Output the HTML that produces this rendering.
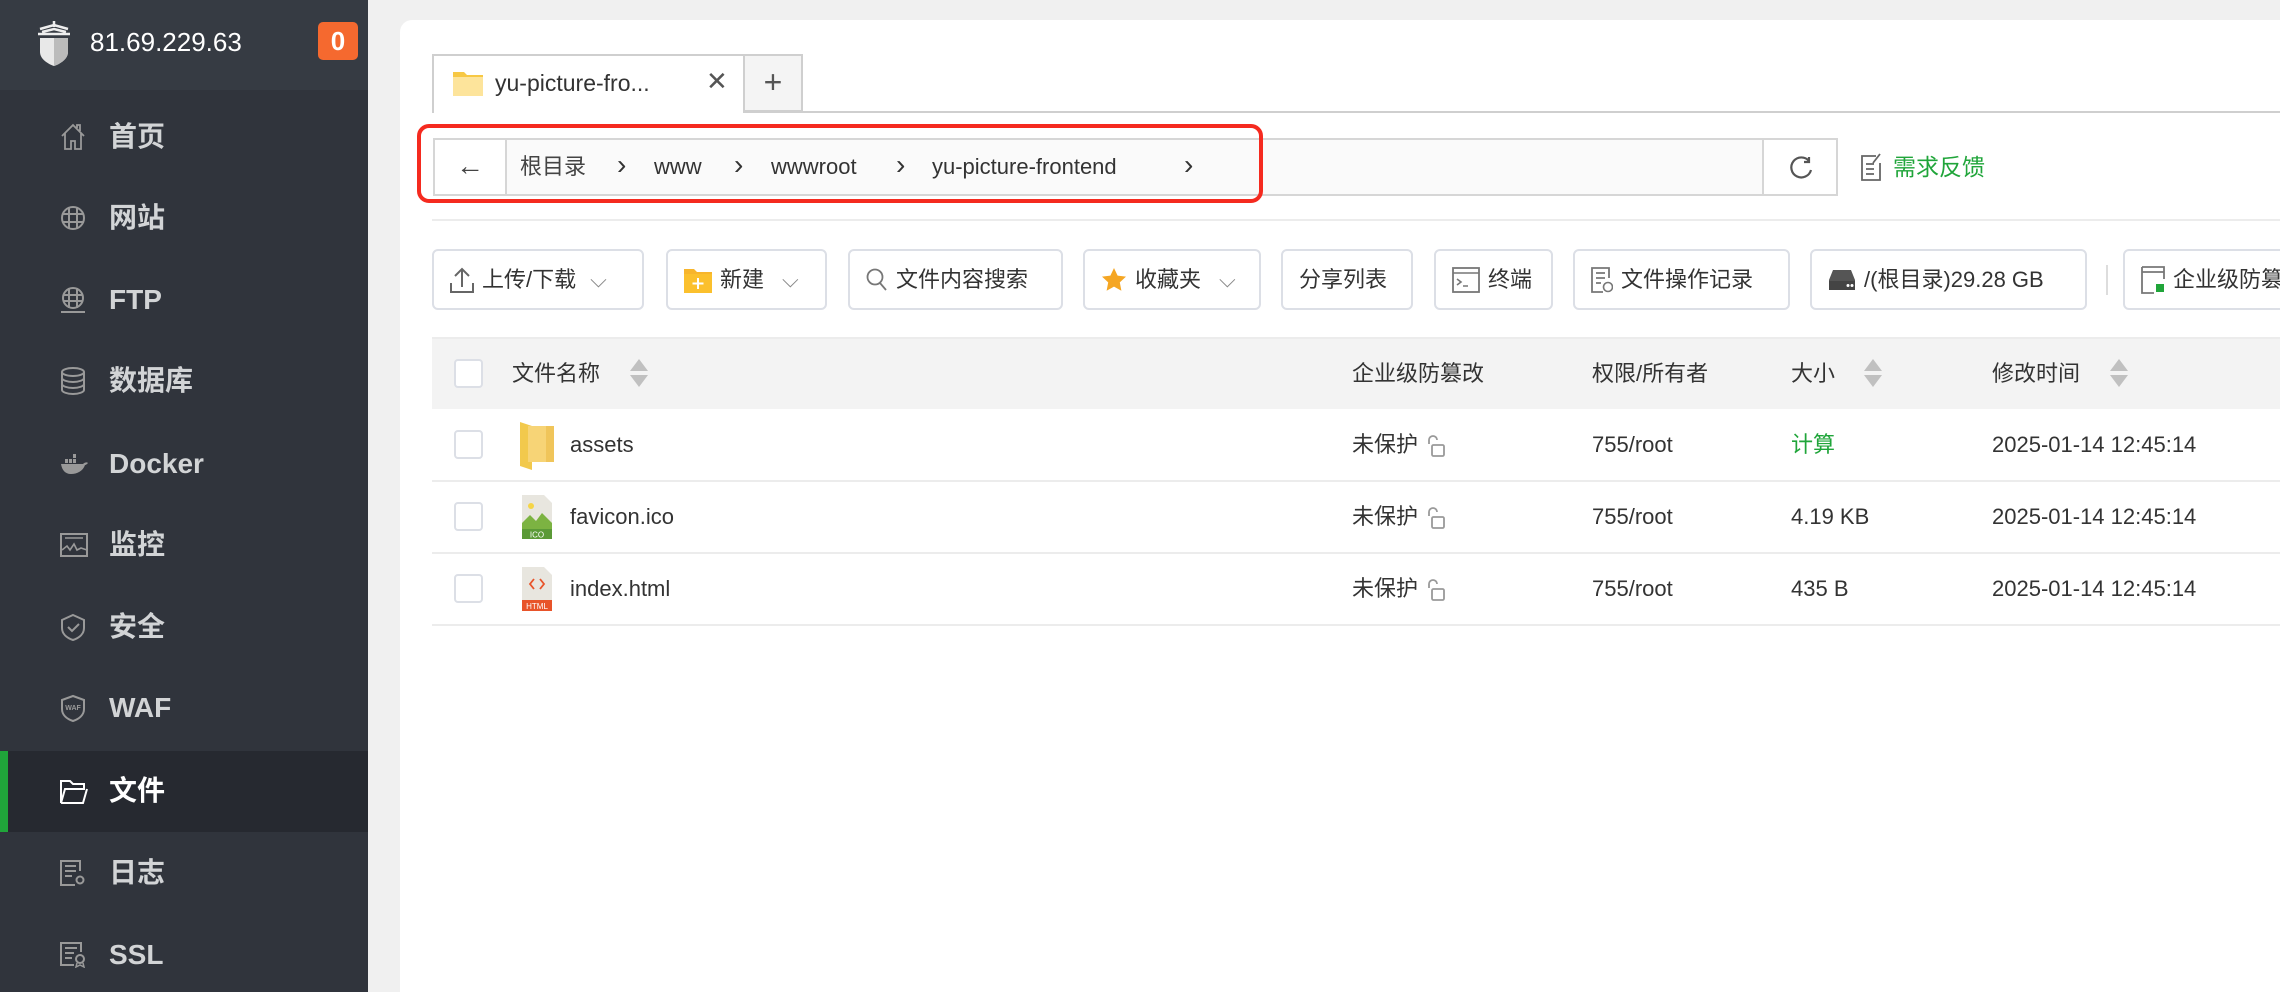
<!DOCTYPE html>
<html><head><meta charset="utf-8"><style>
*{margin:0;padding:0;box-sizing:border-box}
html{overflow:hidden;width:2280px;height:992px}
body{width:2280px;height:992px;overflow:hidden;background:#f0f0f0;font-family:"Liberation Sans","Noto Sans CJK SC",sans-serif;position:relative;color:#444;line-height:30px}
.a{position:absolute;white-space:nowrap}
#side{position:absolute;left:0;top:0;width:368px;height:992px;background:#30343c}
#head{position:absolute;left:0;top:0;width:368px;height:90px;background:#363b43}
.mi{position:absolute;left:0;width:368px;height:80px;color:#d2d4d6;font-size:28px;font-weight:600;line-height:36px}
.mi span{position:absolute;left:109px;top:22px}
.mi svg{position:absolute;left:60px;top:50%;transform:translateY(-50%)}
#card{position:absolute;left:400px;top:20px;width:1900px;height:972px;background:#fff;border-radius:12px 0 0 0}
.btn{position:absolute;top:249px;height:61px;border:2px solid #dcdfe6;border-radius:6px;background:#fff;font-size:22px;color:#333;display:flex;align-items:center;padding-left:16px;gap:8px;line-height:30px}
.th{position:absolute;top:339px;left:432px;width:1900px;height:70px;background:#f3f3f3}
.cb{position:absolute;width:29px;height:29px;border:2px solid #dcdfe6;border-radius:4px;background:#fff}
.t{font-size:22px;color:#333;line-height:30px}
.row{position:absolute;left:432px;width:1900px;height:2px;background:#ececec}
</style></head><body>
<div id="side">
<div id="head"></div>
<svg class="a" style="left:36px;top:20px" width="36" height="46" viewBox="0 0 36 46"><path d="M18 1v6M4 9l14-4 14 4M2 14h32M6 12l12-3 12 3" stroke="#eee" stroke-width="2.5" fill="none"/><path d="M4 18h28v14c0 7-8 12-14 14C12 44 4 39 4 32z" fill="#e8e8e8"/><path d="M18 18v28c6-2 14-7 14-14V18z" fill="#bbb"/></svg>
<div class="a" style="left:90px;top:27px;font-size:26px;color:#fff">81.69.229.63</div>
<div class="a" style="left:318px;top:22px;width:40px;height:38px;background:#f5692f;border-radius:5px;color:#fff;font-size:26px;font-weight:bold;text-align:center;line-height:38px">0</div>

<div class="mi" style="top:97px"><svg width="26" height="28" viewBox="0 0 26 28"><path d="M2 13L13 2l11 11M5 10v16h6v-8h4v8h6V10M17 5V2h3v6" stroke="#999" stroke-width="1.8" fill="none"/></svg><span>首页</span></div>
<div class="mi" style="top:178px"><svg width="26" height="26" viewBox="0 0 26 26"><circle cx="13" cy="13" r="11" stroke="#999" stroke-width="2" fill="none"/><path d="M2 9h22M2 17h22M9 2v22M17 2v22" stroke="#999" stroke-width="2"/></svg><span>网站</span></div>
<div class="mi" style="top:260px"><svg width="26" height="28" viewBox="0 0 26 28"><circle cx="13" cy="12" r="10" stroke="#999" stroke-width="2" fill="none"/><path d="M3 9h20M3 15h20M9 2v20M17 2v20M1 26h24" stroke="#999" stroke-width="2"/></svg><span>FTP</span></div>
<div class="mi" style="top:341px"><svg width="26" height="28" viewBox="0 0 26 28"><ellipse cx="13" cy="5" rx="11" ry="4" stroke="#999" stroke-width="2" fill="none"/><path d="M2 5v18c0 2 5 4 11 4s11-2 11-4V5M2 11c0 2 5 4 11 4s11-2 11-4M2 17c0 2 5 4 11 4s11-2 11-4" stroke="#999" stroke-width="2" fill="none"/></svg><span>数据库</span></div>
<div class="mi" style="top:424px"><svg width="28" height="22" viewBox="0 0 28 22"><path d="M1 11h22c2-2 4-2 5-1-1 1-2 2-3 2-2 6-8 9-14 9-6 0-9-4-10-10z" fill="#999"/><rect x="5" y="6" width="3" height="4" fill="#999"/><rect x="9" y="6" width="3" height="4" fill="#999"/><rect x="13" y="6" width="3" height="4" fill="#999"/><rect x="13" y="1" width="3" height="4" fill="#999"/></svg><span>Docker</span></div>
<div class="mi" style="top:505px"><svg width="28" height="24" viewBox="0 0 28 24"><rect x="1" y="1" width="26" height="22" stroke="#999" stroke-width="2" fill="none"/><path d="M5 5h18M2 17l5-4 3 4 4-6 3 6 4-2 6 2" stroke="#999" stroke-width="1.6" fill="none"/></svg><span>监控</span></div>
<div class="mi" style="top:587px"><svg width="26" height="28" viewBox="0 0 26 28"><path d="M13 2l11 5v8c0 6-5 10-11 12C7 25 2 21 2 15V7z" stroke="#999" stroke-width="2" fill="none"/><path d="M8 14l4 4 7-7" stroke="#999" stroke-width="2" fill="none"/></svg><span>安全</span></div>
<div class="mi" style="top:668px"><svg width="26" height="28" viewBox="0 0 26 28"><path d="M13 2l11 4v9c0 6-5 10-11 12C7 25 2 21 2 15V6z" stroke="#999" stroke-width="2" fill="none"/><text x="13" y="16" font-size="7" fill="#999" text-anchor="middle" font-family="Liberation Sans">WAF</text></svg><span>WAF</span></div>
<div class="mi" style="top:751px;height:81px;background:#262930;color:#fff"><div class="a" style="left:0;top:0;width:8px;height:81px;background:#20a53a"></div><svg width="28" height="24" viewBox="0 0 28 24"><path d="M1 1h9l3 3h11v5H5L1 23zM1 23h22l4-14" stroke="#fff" stroke-width="2" fill="none"/></svg><span>文件</span></div>
<div class="mi" style="top:833px"><svg width="26" height="26" viewBox="0 0 26 26"><path d="M20 11V1H1v24h14M5 6h11M5 11h11M5 16h7" stroke="#999" stroke-width="2" fill="none"/><circle cx="20" cy="20" r="3.5" stroke="#999" stroke-width="2" fill="none"/></svg><span>日志</span></div>
<div class="mi" style="top:915px"><svg width="26" height="26" viewBox="0 0 26 26"><path d="M21 10V1H1v22h13M5 6h12M5 11h9M5 16h7" stroke="#999" stroke-width="2" fill="none"/><circle cx="20" cy="17" r="4" stroke="#999" stroke-width="2" fill="none"/><path d="M17 21l-1 4 4-2 4 2-1-4" stroke="#999" stroke-width="1.5" fill="none"/></svg><span>SSL</span></div>
</div>

<div id="card"></div>
<div class="a" style="left:432px;top:111px;width:1868px;height:2px;background:#cfcfcf"></div>
<div class="a" style="left:432px;top:54px;width:313px;height:59px;background:#fff;border:2px solid #cfcfcf;border-bottom:none"></div>
<div class="a" style="left:745px;top:54px;width:58px;height:58px;background:#f4f4f4;border:2px solid #cfcfcf;border-left:none;font-size:32px;color:#555;text-align:center;line-height:52px">+</div>
<svg class="a" style="left:453px;top:70px" width="30" height="26" viewBox="0 0 30 26"><path d="M0 2h11l3 3h16v21H0z" fill="#f7c844"/><rect x="0" y="7" width="30" height="19" fill="#fde49b"/></svg>
<div class="a" style="left:495px;top:68px;font-size:23px;color:#333">yu-picture-fro...</div>
<div class="a" style="left:706px;top:66px;font-size:26px;color:#555">✕</div>

<div class="a" style="left:433px;top:138px;width:1405px;height:58px;background:#fafafa;border:2px solid #d6d6d6"></div>
<div class="a" style="left:433px;top:138px;width:74px;height:58px;background:#fff;border:2px solid #d6d6d6;font-size:28px;text-align:center;line-height:52px;color:#444">←</div>
<div class="a" style="left:1762px;top:138px;width:76px;height:58px;background:#fff;border:2px solid #d6d6d6"></div>
<svg class="a" style="left:1788px;top:155px" width="26" height="26" viewBox="0 0 26 26"><path d="M21 6A10 10 0 1 0 23 15M21 2v5h-5" stroke="#555" stroke-width="2.2" fill="none"/></svg>
<div class="a t" style="left:520px;top:152px;color:#444">根目录</div>
<div class="a t" style="left:617px;top:150px;font-size:28px">›</div>
<div class="a t" style="left:654px;top:152px">www</div>
<div class="a t" style="left:734px;top:150px;font-size:28px">›</div>
<div class="a t" style="left:771px;top:152px">wwwroot</div>
<div class="a t" style="left:896px;top:150px;font-size:28px">›</div>
<div class="a t" style="left:932px;top:152px">yu-picture-frontend</div>
<div class="a t" style="left:1184px;top:150px;font-size:28px">›</div>
<div class="a" style="left:417px;top:124px;width:846px;height:79px;border:4px solid #f52a1f;border-radius:12px"></div>
<svg class="a" style="left:1861px;top:153px" width="22" height="28" viewBox="0 0 22 28"><path d="M15 3H1v24h18V10M5 11h8M5 16h8M5 21h8M19 1l-7 9" stroke="#666" stroke-width="1.8" fill="none"/></svg>
<div class="a" style="left:1893px;top:152px;font-size:23px;color:#20a53a">需求反馈</div>
<div class="a" style="left:432px;top:219px;width:1868px;height:2px;background:#ececec"></div>

<div class="btn" style="left:432px;width:212px"><svg width="24" height="26" viewBox="0 0 24 26"><path d="M12 20V2M5 9l7-7 7 7M1 16v9h22v-9" stroke="#666" stroke-width="2" fill="none"/></svg>上传/下载<span style="color:#888;margin-left:6px">⌵</span></div>
<div class="btn" style="left:666px;width:161px"><svg width="28" height="26" viewBox="0 0 28 26"><path d="M0 2h10l3 3h15v21H0z" fill="#f7b52c"/><rect y="7" width="28" height="19" fill="#fbc02d"/><path d="M14 11v11M8.5 16.5h11" stroke="#fff" stroke-width="2"/></svg>新建<span style="color:#888;margin-left:10px">⌵</span></div>
<div class="btn" style="left:848px;width:215px"><svg width="22" height="24" viewBox="0 0 22 24"><circle cx="9" cy="9" r="7.5" stroke="#777" stroke-width="1.8" fill="none"/><path d="M14 15l6 7" stroke="#777" stroke-width="1.8"/></svg>文件内容搜索</div>
<div class="btn" style="left:1083px;width:178px"><svg width="26" height="26" viewBox="0 0 26 26"><path d="M13 1l3.6 7.6 8.4 1-6.2 5.8 1.6 8.4L13 19.6 5.6 23.8l1.6-8.4L1 9.6l8.4-1z" fill="#f5a623"/></svg>收藏夹<span style="color:#888;margin-left:10px">⌵</span></div>
<div class="btn" style="left:1281px;width:132px">分享列表</div>
<div class="btn" style="left:1434px;width:119px"><svg width="28" height="26" viewBox="0 0 28 26"><rect x="1" y="1" width="26" height="24" stroke="#777" stroke-width="1.8" fill="none"/><path d="M1 6h26M5 12l4 3-4 3M11 19h5" stroke="#777" stroke-width="1.6" fill="none"/></svg>终端</div>
<div class="btn" style="left:1573px;width:217px"><svg width="22" height="26" viewBox="0 0 22 26"><path d="M18 11V1H1v24h11M5 6h9M5 11h9M5 16h5" stroke="#777" stroke-width="1.8" fill="none"/><circle cx="17" cy="20" r="4.5" stroke="#777" stroke-width="1.6" fill="none"/></svg>文件操作记录</div>
<div class="btn" style="left:1810px;width:277px"><svg width="28" height="22" viewBox="0 0 28 22"><path d="M5 1h18l4 10v10H1V11z" fill="#555"/><rect x="1" y="12" width="26" height="9" fill="#444"/><circle cx="20" cy="16.5" r="1.5" fill="#fff"/><circle cx="24" cy="16.5" r="1.5" fill="#fff"/></svg>/(根目录)29.28 GB</div>
<div class="a" style="left:2106px;top:265px;width:2px;height:30px;background:#ddd"></div>
<div class="btn" style="left:2123px;width:200px"><svg width="24" height="28" viewBox="0 0 24 28"><path d="M1 1h22v12M1 1v26h12M1 6h22" stroke="#777" stroke-width="1.8" fill="none"/><rect x="15" y="18" width="8" height="8" fill="#20a53a"/></svg>企业级防篡改</div>

<div class="th"></div>
<div class="a" style="left:432px;top:337px;width:1868px;height:2px;background:#ececec"></div>
<div class="cb" style="left:454px;top:359px"></div>
<div class="a t" style="left:512px;top:359px">文件名称</div>
<svg class="a" style="left:628px;top:358px" width="22" height="30" viewBox="0 0 22 30"><path d="M11 1l9 12H2zM11 29l9-12H2z" fill="#c0c0c0"/></svg>
<div class="a t" style="left:1352px;top:359px">企业级防篡改</div>
<div class="a t" style="left:1592px;top:359px">权限/所有者</div>
<div class="a t" style="left:1791px;top:359px">大小</div>
<svg class="a" style="left:1862px;top:358px" width="22" height="30" viewBox="0 0 22 30"><path d="M11 1l9 12H2zM11 29l9-12H2z" fill="#c0c0c0"/></svg>
<div class="a t" style="left:1992px;top:359px">修改时间</div>
<svg class="a" style="left:2108px;top:358px" width="22" height="30" viewBox="0 0 22 30"><path d="M11 1l9 12H2zM11 29l9-12H2z" fill="#c0c0c0"/></svg>

<div class="row" style="top:480px"></div>
<div class="row" style="top:552px"></div>
<div class="row" style="top:624px"></div>

<div class="cb" style="left:454px;top:430px"></div>
<svg class="a" style="left:520px;top:422px" width="34" height="48" viewBox="0 0 34 48"><path d="M0 0l12 4v44L0 44z" fill="#f2c94c"/><path d="M8 4h26v36H8z" fill="#f7d476"/><path d="M26 4h8v36h-8z" fill="#f0c55a"/></svg>
<div class="a t" style="left:570px;top:430px">assets</div>
<div class="cb" style="left:454px;top:502px"></div>
<svg class="a" style="left:522px;top:495px" width="30" height="44" viewBox="0 0 30 44"><path d="M0 0h22l8 8v36H0z" fill="#e8e6df"/><circle cx="9" cy="11" r="3" fill="#f5d547"/><path d="M0 28l8-8 6 6 6-8 10 10v16H0z" fill="#7cb342"/><rect y="34" width="30" height="10" fill="#5b9a37"/><text x="15" y="42.5" font-size="8" fill="#fff" text-anchor="middle" font-family="Liberation Sans">ICO</text></svg>
<div class="a t" style="left:570px;top:502px">favicon.ico</div>
<div class="cb" style="left:454px;top:574px"></div>
<svg class="a" style="left:522px;top:567px" width="30" height="44" viewBox="0 0 30 44"><path d="M0 0h22l8 8v36H0z" fill="#e8e6df"/><path d="M12 12l-4 5 4 5M18 12l4 5-4 5" stroke="#e8542a" stroke-width="1.8" fill="none"/><rect y="33" width="30" height="11" fill="#e8542a"/><text x="15" y="42" font-size="8" fill="#fff" text-anchor="middle" font-family="Liberation Sans">HTML</text></svg>
<div class="a t" style="left:570px;top:574px">index.html</div>

<div class="a t" style="left:1352px;top:430px">未保护</div>
<div class="a t" style="left:1352px;top:502px">未保护</div>
<div class="a t" style="left:1352px;top:574px">未保护</div>
<svg class="a" style="left:1426px;top:434px" width="20" height="24" viewBox="0 0 20 24"><path d="M3 10V6a4 4 0 0 1 8 0" stroke="#999" stroke-width="1.8" fill="none"/><rect x="6" y="11" width="12" height="11" rx="1.5" stroke="#999" stroke-width="1.8" fill="none"/></svg>
<svg class="a" style="left:1426px;top:506px" width="20" height="24" viewBox="0 0 20 24"><path d="M3 10V6a4 4 0 0 1 8 0" stroke="#999" stroke-width="1.8" fill="none"/><rect x="6" y="11" width="12" height="11" rx="1.5" stroke="#999" stroke-width="1.8" fill="none"/></svg>
<svg class="a" style="left:1426px;top:578px" width="20" height="24" viewBox="0 0 20 24"><path d="M3 10V6a4 4 0 0 1 8 0" stroke="#999" stroke-width="1.8" fill="none"/><rect x="6" y="11" width="12" height="11" rx="1.5" stroke="#999" stroke-width="1.8" fill="none"/></svg>
<div class="a t" style="left:1592px;top:430px">755/root</div>
<div class="a t" style="left:1592px;top:502px">755/root</div>
<div class="a t" style="left:1592px;top:574px">755/root</div>
<div class="a t" style="left:1791px;top:430px;color:#20a53a">计算</div>
<div class="a t" style="left:1791px;top:502px">4.19 KB</div>
<div class="a t" style="left:1791px;top:574px">435 B</div>
<div class="a t" style="left:1992px;top:430px">2025-01-14 12:45:14</div>
<div class="a t" style="left:1992px;top:502px">2025-01-14 12:45:14</div>
<div class="a t" style="left:1992px;top:574px">2025-01-14 12:45:14</div>
</body></html>
